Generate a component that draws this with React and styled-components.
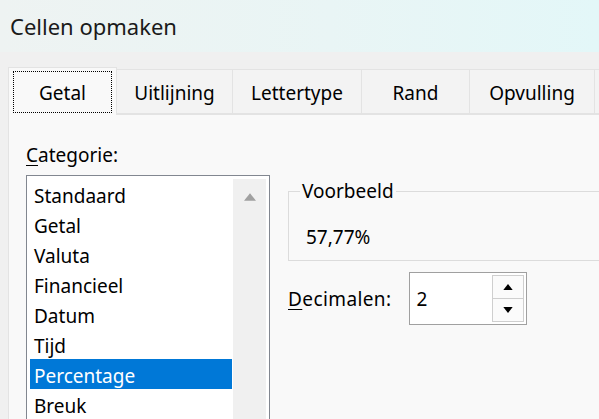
import React from 'react';
import styled, { createGlobalStyle } from 'styled-components';

const GlobalStyle = createGlobalStyle`
  html, body {
    margin: 0;
    padding: 0;
    width: 599px;
    height: 419px;
    overflow: hidden;
    background: #f0f0f0;
    font-family: "Noto Sans", "Open Sans", sans-serif;
    color: #000;
  }
`;

const Window = styled.div`
  width: 599px;
  height: 419px;
  display: flex;
  flex-direction: column;
  overflow: hidden;
  background: #f0f0f0;
`;

const TitleBar = styled.div`
  height: 52px;
  flex: none;
  display: flex;
  align-items: center;
  padding-left: 10px;
  background: linear-gradient(to right, #eef3f2, #e9f5f5 55%, #e3f7f8);
  font-size: 22px;
  color: #1a1a1a;
`;

const Body = styled.div`
  flex: 1;
  padding: 15px 0 0 8px;
  display: flex;
  flex-direction: column;
  min-height: 0;
`;

const TabStrip = styled.div`
  display: flex;
  align-items: flex-end;
  height: 47px;
  flex: none;
  position: relative;
  z-index: 1;
`;

const Tab = styled.div`
  flex: none;
  width: ${p => p.$w}px;
  height: ${p => (p.$active ? 48 : 45)}px;
  margin-bottom: ${p => (p.$active ? -1 : 0)}px;
  box-sizing: border-box;
  display: flex;
  align-items: center;
  justify-content: center;
  font-size: 19px;
  background: ${p => (p.$active ? '#f9f9f9' : '#f3f3f3')};
  border: 1px solid #e3e3e3;
  border-bottom: ${p => (p.$active ? 'none' : '1px solid #e3e3e3')};
  border-left: ${p => (p.$first || p.$active ? '1px solid #e3e3e3' : 'none')};
  padding: ${p => (p.$active ? '3px 4px 2px' : '2px 0 0')};
`;

const FocusRing = styled.div`
  width: 100%;
  height: 100%;
  box-sizing: border-box;
  border: 1px dotted #000;
  display: flex;
  align-items: center;
  justify-content: center;
  padding-top: 2px;
`;

const Panel = styled.div`
  flex: 1;
  background: #f9f9f9;
  border-top: 1px solid #e3e3e3;
  border-left: 1px solid #e3e3e3;
  display: flex;
  gap: 18px;
  padding: 28px 0 0 17px;
  font-size: 19px;
`;

const LeftCol = styled.div`
  display: flex;
  flex-direction: column;
  width: 244px;
  flex: none;
`;

const Label = styled.div`
  line-height: 24px;
  height: 24px;
  margin-bottom: ${p => p.$mb || 0}px;
  white-space: nowrap;
  letter-spacing: ${p => p.$ls || 0}px;
`;

const Key = styled.span`
  text-decoration: underline;
  text-underline-offset: 3px;
`;

const ListBox = styled.div`
  box-sizing: border-box;
  height: 260px;
  border: 1px solid #828790;
  background: #fff;
  padding: 3px;
  display: flex;
  gap: 1px;
`;

const Items = styled.div`
  flex: 1;
  display: flex;
  flex-direction: column;
`;

const Item = styled.div`
  height: 30px;
  flex: none;
  box-sizing: border-box;
  display: flex;
  align-items: center;
  padding: 3px 0 0 4px;
  background: ${p => (p.$selected ? '#0078d7' : 'transparent')};
  color: ${p => (p.$selected ? '#fff' : '#000')};
`;

const ScrollBar = styled.div`
  width: 33px;
  flex: none;
  background: #f0f0f0;
  display: flex;
  justify-content: center;
  padding-top: 14px;
  box-sizing: border-box;
`;

const RightCol = styled.div`
  flex: 1;
  display: flex;
  flex-direction: column;
  padding-top: 36px;
  min-width: 0;
`;

const Group = styled.fieldset`
  margin: 0 -40px 0 0;
  padding: 22px 17px 0 17px;
  height: 82px;
  box-sizing: border-box;
  border: 1px solid #dcdcdc;
  min-width: 0;
`;

const Legend = styled.legend`
  padding: 0 2px;
  margin-left: -6px;
  line-height: 24px;
`;

const Preview = styled.div`
  line-height: 24px;
`;

const SpinRow = styled.div`
  display: flex;
  align-items: center;
  margin-top: 11px;
  gap: 17px;
`;

const SpinBox = styled.div`
  width: 118px;
  height: 53px;
  box-sizing: border-box;
  border: 1px solid #a0a0a0;
  background: #fff;
  display: flex;
  align-items: center;
  padding: 1px 2px 1px 7px;
`;

const SpinValue = styled.div`
  flex: 1;
`;

const SpinButtons = styled.div`
  width: 32px;
  height: 47px;
  display: flex;
  flex-direction: column;
`;

const SpinButton = styled.div`
  flex: 1;
  box-sizing: border-box;
  border: 1px solid #cfcfcf;
  border-top: ${p => (p.$down ? 'none' : '1px solid #cfcfcf')};
  background: #fbfbfb;
  display: flex;
  align-items: center;
  justify-content: center;
`;

const Triangle = ({ down, color = '#000', w = 11, h = 7 }) => (
  <svg width={w} height={h} viewBox="0 0 11 7">
    <polygon points={down ? '0,0 11,0 5.5,7' : '0,7 11,7 5.5,0'} fill={color} />
  </svg>
);

// last tab runs off the right edge, only its border shows
const tabs = [
  ['Getal', 109],
  ['Uitlijning', 116],
  ['Lettertype', 129],
  ['Rand', 108],
  ['Opvulling', 125],
  ['', 130],
];

const categories = ['Standaard', 'Getal', 'Valuta', 'Financieel', 'Datum', 'Tijd', 'Percentage', 'Breuk'];

function App() {
  return (
    <Window>
      <GlobalStyle />
      <TitleBar>Cellen opmaken</TitleBar>
      <Body>
        <TabStrip>
          {tabs.map(([name, w], i) => (
            <Tab key={i} $w={w} $active={i === 0} $first={i === 0}>
              {i === 0 ? <FocusRing>{name}</FocusRing> : name}
            </Tab>
          ))}
        </TabStrip>
        <Panel>
          <LeftCol>
            <Label $mb={8}>
              <Key>C</Key>ategorie:
            </Label>
            <ListBox>
              <Items>
                {categories.map(c => (
                  <Item key={c} $selected={c === 'Percentage'}>{c}</Item>
                ))}
              </Items>
              <ScrollBar>
                <Triangle color="#a0a0a0" w={12} h={8} />
              </ScrollBar>
            </ListBox>
          </LeftCol>
          <RightCol>
            <Group>
              <Legend>Voorbeeld</Legend>
              <Preview>57,77%</Preview>
            </Group>
            <SpinRow>
              <Label $ls={0.4}>
                <Key>D</Key>ecimalen:
              </Label>
              <SpinBox>
                <SpinValue>2</SpinValue>
                <SpinButtons>
                  <SpinButton>
                    <Triangle w={10} h={6} />
                  </SpinButton>
                  <SpinButton $down>
                    <Triangle down w={10} h={6} />
                  </SpinButton>
                </SpinButtons>
              </SpinBox>
            </SpinRow>
          </RightCol>
        </Panel>
      </Body>
    </Window>
  );
}

export default App;
